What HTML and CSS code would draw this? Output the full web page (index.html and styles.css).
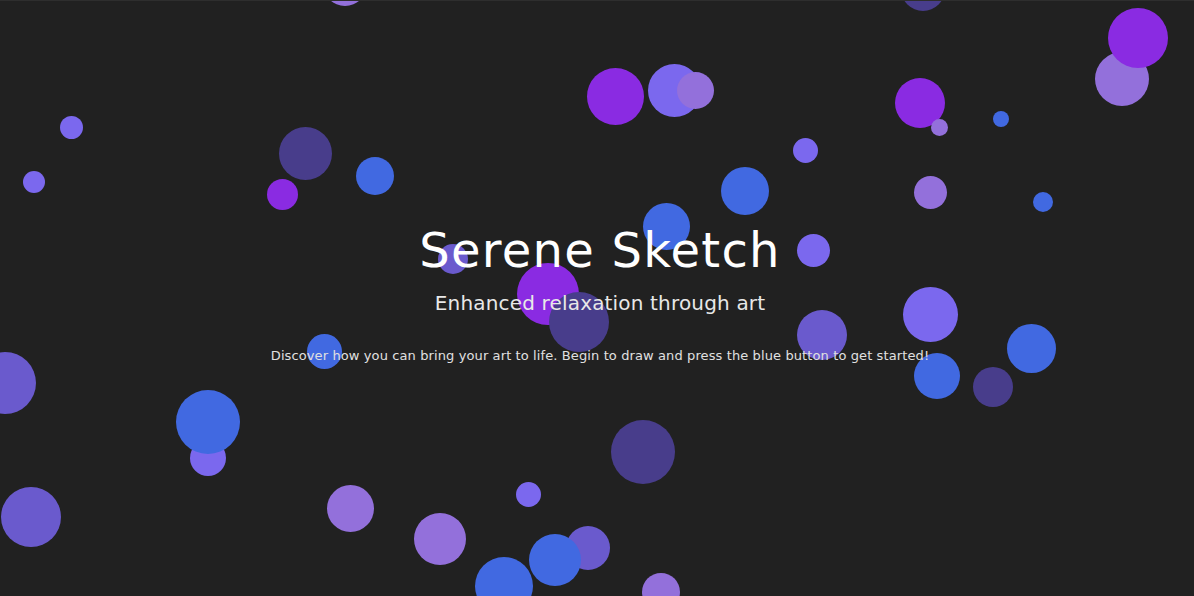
FILE: index.html
```html
<!DOCTYPE html>
<html lang="en">
<head>
<meta charset="utf-8">
<title>Serene Sketch</title>
<link rel="stylesheet" href="styles.css">
</head>
<body>
<div class="canvas" aria-hidden="true">
  <span class="dot c-mp" style="--x:345px;--y:-16px;--r:22px"></span>
  <span class="dot c-ds" style="--x:923px;--y:-11px;--r:22px"></span>
  <span class="dot c-ms" style="--x:71px;--y:127px;--r:11.5px"></span>
  <span class="dot c-ms" style="--x:34px;--y:182px;--r:11px"></span>
  <span class="dot c-ds" style="--x:305px;--y:153px;--r:26.5px"></span>
  <span class="dot c-bv" style="--x:282px;--y:194px;--r:15.5px"></span>
  <span class="dot c-rb" style="--x:375px;--y:176px;--r:19px"></span>
  <span class="dot c-bv" style="--x:615px;--y:96px;--r:28.5px"></span>
  <span class="dot c-ms" style="--x:674px;--y:90px;--r:26.5px"></span>
  <span class="dot c-mp" style="--x:695px;--y:90px;--r:18.5px"></span>
  <span class="dot c-bv" style="--x:920px;--y:103px;--r:25px"></span>
  <span class="dot c-mp" style="--x:939px;--y:127px;--r:8.5px"></span>
  <span class="dot c-rb" style="--x:1001px;--y:119px;--r:8px"></span>
  <span class="dot c-mp" style="--x:1122px;--y:79px;--r:27px"></span>
  <span class="dot c-bv" style="--x:1138px;--y:38px;--r:30px"></span>
  <span class="dot c-ms" style="--x:805px;--y:150px;--r:12.5px"></span>
  <span class="dot c-rb" style="--x:745px;--y:191px;--r:24px"></span>
  <span class="dot c-mp" style="--x:930px;--y:192px;--r:16.5px"></span>
  <span class="dot c-rb" style="--x:1043px;--y:202px;--r:10px"></span>
  <span class="dot c-rb" style="--x:666px;--y:226px;--r:23.5px"></span>
  <span class="dot c-ms" style="--x:813px;--y:250px;--r:16.5px"></span>
  <span class="dot c-sb" style="--x:453px;--y:259px;--r:15px"></span>
  <span class="dot c-bv" style="--x:548px;--y:294px;--r:31px"></span>
  <span class="dot c-ds" style="--x:579px;--y:322px;--r:30px"></span>
  <span class="dot c-rb" style="--x:324px;--y:351px;--r:17.5px"></span>
  <span class="dot c-sb" style="--x:822px;--y:335px;--r:25px"></span>
  <span class="dot c-ms" style="--x:930px;--y:314px;--r:27.5px"></span>
  <span class="dot c-rb" style="--x:1031px;--y:348px;--r:24.5px"></span>
  <span class="dot c-rb" style="--x:937px;--y:376px;--r:23px"></span>
  <span class="dot c-ds" style="--x:993px;--y:387px;--r:20px"></span>
  <span class="dot c-ds" style="--x:643px;--y:452px;--r:32px"></span>
  <span class="dot c-sb" style="--x:588px;--y:548px;--r:22px"></span>
  <span class="dot c-mp" style="--x:661px;--y:592px;--r:19px"></span>
  <span class="dot c-sb" style="--x:5px;--y:383px;--r:31px"></span>
  <span class="dot c-ms" style="--x:208px;--y:458px;--r:18px"></span>
  <span class="dot c-rb" style="--x:208px;--y:422px;--r:32px"></span>
  <span class="dot c-sb" style="--x:31px;--y:517px;--r:30px"></span>
  <span class="dot c-mp" style="--x:350px;--y:508px;--r:23.5px"></span>
  <span class="dot c-mp" style="--x:440px;--y:539px;--r:26px"></span>
  <span class="dot c-ms" style="--x:528px;--y:494px;--r:12.5px"></span>
  <span class="dot c-rb" style="--x:504px;--y:586px;--r:29px"></span>
  <span class="dot c-rb" style="--x:555px;--y:560px;--r:26px"></span>
</div>
<main class="hero">
  <h1 class="title">Serene Sketch</h1>
  <h2 class="subtitle">Enhanced relaxation through art</h2>
  <p class="intro">Discover how you can bring your art to life. Begin to draw and press the blue button to get started!</p>
</main>
</body>
</html>
```
FILE: styles.css
```css
html, body {
  margin: 0;
  padding: 0;
  height: 100%;
  overflow: hidden;
}

body {
  background: #212121;
  border-top: 1px solid #2e2e2e;
  box-sizing: border-box;
  font-family: "DejaVu Sans", "Open Sans", sans-serif;
  color: #ffffff;
  position: relative;
}

.canvas {
  position: absolute;
  inset: 0;
  overflow: hidden;
  z-index: 0;
}

.dot {
  position: absolute;
  left: calc(var(--x) - var(--r));
  top: calc(var(--y) - var(--r) - 1px);
  width: calc(var(--r) * 2);
  height: calc(var(--r) * 2);
  border-radius: 50%;
}

.c-rb { background: #4169e1; }
.c-bv { background: #8a2be2; }
.c-ms { background: #7b68ee; }
.c-mp { background: #9370db; }
.c-ds { background: #483d8b; }
.c-sb { background: #6a5acd; }

.hero {
  position: relative;
  z-index: 1;
  height: 100%;
  display: flex;
  flex-direction: column;
  align-items: center;
  justify-content: center;
  padding: 0 0 10px 6px;
  box-sizing: border-box;
  text-align: center;
}

.title {
  margin: 0;
  font-size: 48px;
  line-height: 48px;
  font-weight: 400;
  letter-spacing: 1.25px;
  color: #ffffff;
}

.subtitle {
  margin: 19px 0 0;
  font-size: 20px;
  line-height: 20px;
  font-weight: 400;
  letter-spacing: 0.17px;
  color: #e8e8e8;
}

.intro {
  margin: 36px 0 0;
  font-size: 13px;
  line-height: 13px;
  font-weight: 400;
  letter-spacing: 0.11px;
  color: #e0e0e0;
}
```
